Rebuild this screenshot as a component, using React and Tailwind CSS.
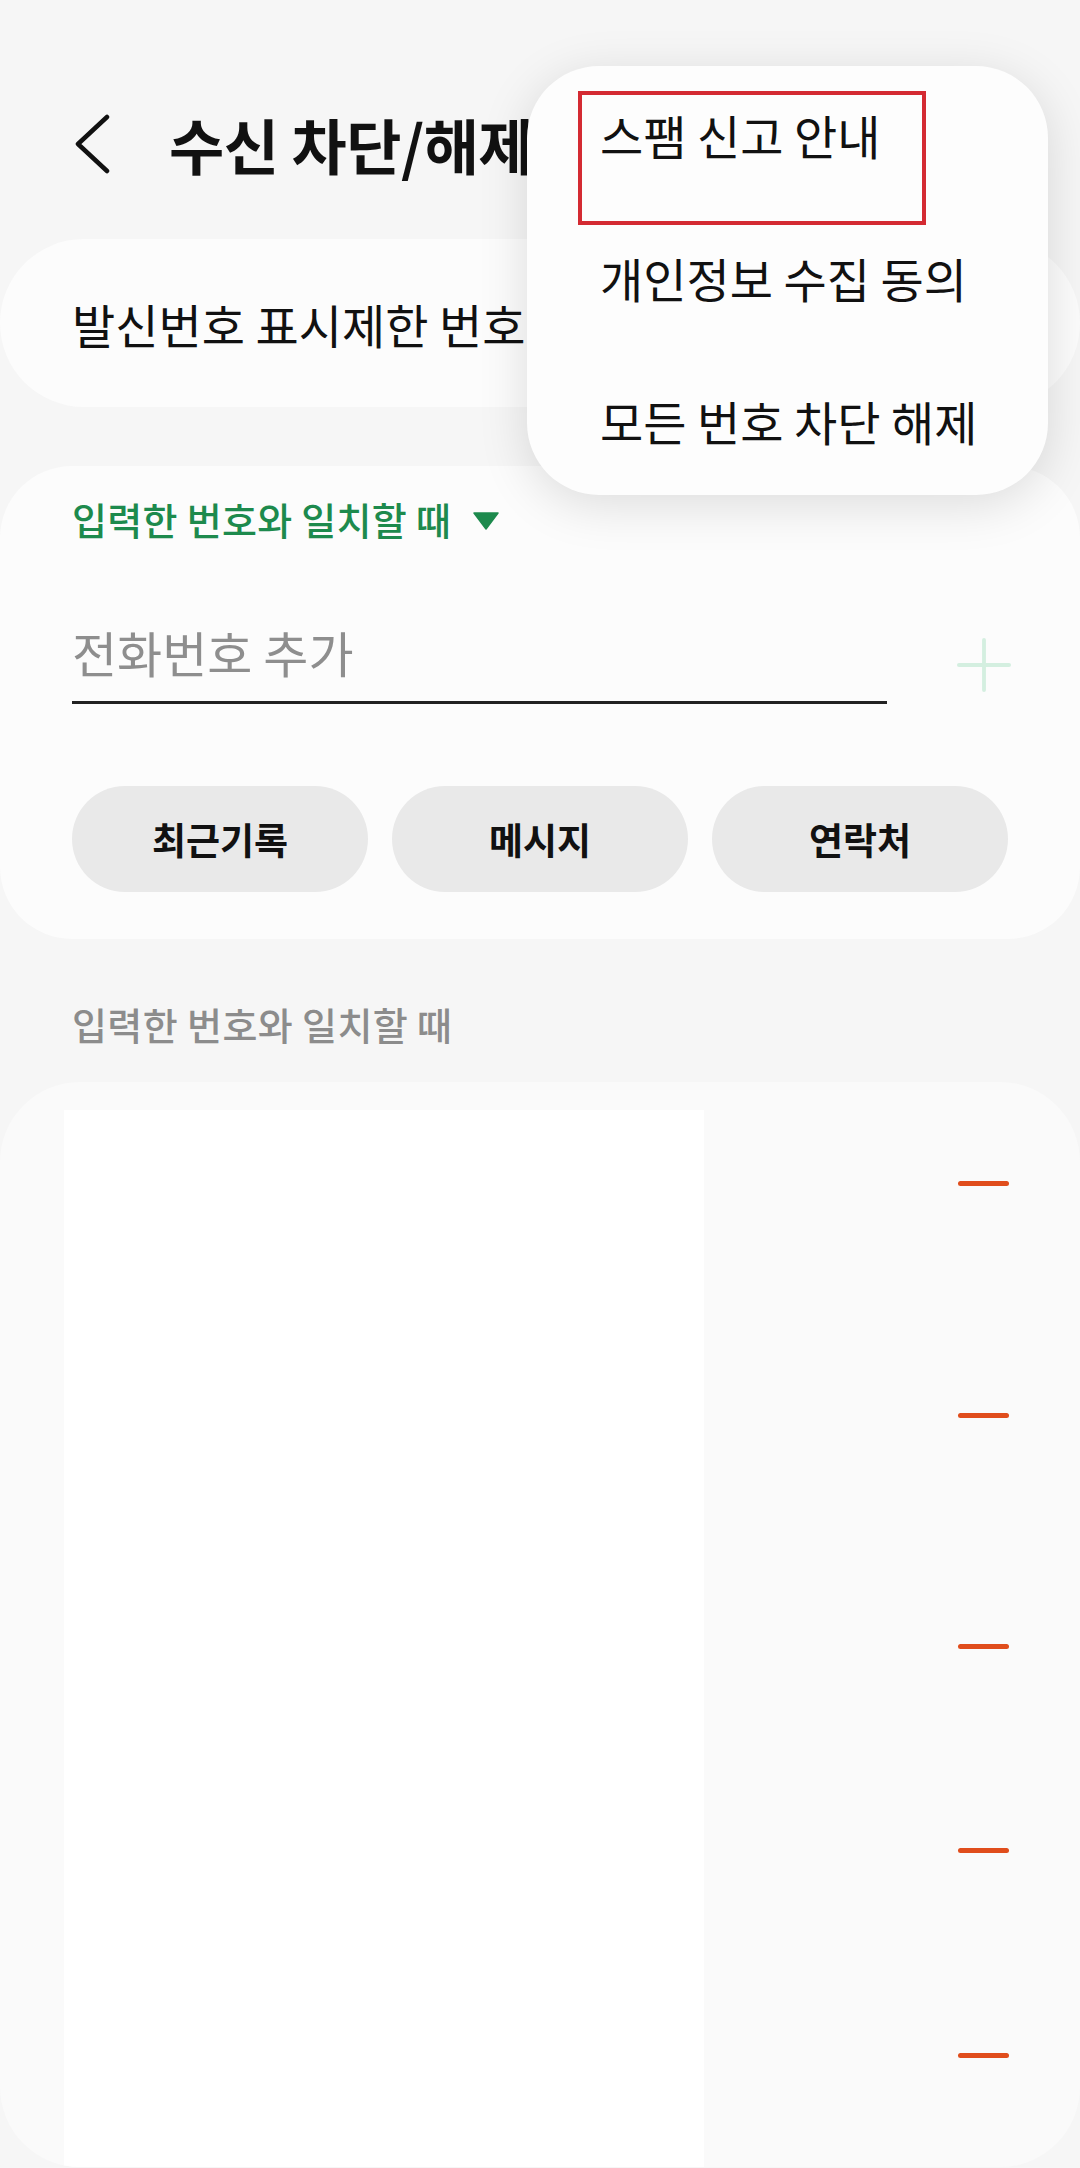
import React from "react";

const FONT = { fontFamily: '"Noto Sans CJK KR", "Noto Sans", sans-serif' };

function Minus() {
  return <div className="w-[51px] h-[5px] rounded-full bg-[#e04d1c]" />;
}

export default function App() {
  return (
    <div
      className="relative w-[1080px] h-[2168px] overflow-hidden bg-[#f6f6f6] text-[#111]"
      style={FONT}
    >
      {/* Header */}
      <div className="flex items-center h-[88px] mt-[100px] mb-[51px] pl-[74px]">
        <svg width="38" height="60" viewBox="0 0 38 60" className="shrink-0">
          <polyline
            points="33,3 4,30 33,57"
            fill="none"
            stroke="#111"
            strokeWidth="4.5"
            strokeLinecap="round"
            strokeLinejoin="round"
          />
        </svg>
        <h1 className="ml-[57px] text-[60px] font-bold leading-none tracking-[-0.5px] whitespace-nowrap">
          수신 차단/해제
        </h1>
      </div>

      {/* Card 1 */}
      <div className="h-[168px] rounded-[84px] bg-[#fcfcfc] flex items-center px-[72px] overflow-hidden">
        <span className="text-[47px] leading-none whitespace-nowrap">발신번호 표시제한 번호 차단</span>
      </div>

      {/* Card 2 */}
      <div className="mt-[59px] rounded-[72px] bg-[#fcfcfc] px-[72px] pt-[30px] pb-[47px]">
        <div className="flex items-center h-[46px] gap-[22px]">
          <span className="text-[38px] font-medium text-[#1d8a4d] leading-none whitespace-nowrap tracking-[0.3px]">
            입력한 번호와 일치할 때
          </span>
          <svg width="26" height="18" viewBox="0 0 26 18" className="mt-[4px]">
            <polygon points="1,1 25,1 13,17" fill="#1d8a4d" stroke="#1d8a4d" strokeWidth="1.5" strokeLinejoin="round" />
          </svg>
        </div>

        <div className="mt-[70px] flex items-start">
          <div className="w-[815px] h-[92px] border-b-[3px] border-[#222]">
            <span className="block text-[49px] leading-[80px] text-[#8e8e8e] whitespace-nowrap">
              전화번호 추가
            </span>
          </div>
          <div className="ml-auto mr-[-3px] mt-[26px] w-[54px] h-[54px] flex items-center justify-center">
            <svg width="56" height="56" viewBox="0 0 56 56">
              <line x1="28" y1="2" x2="28" y2="54" stroke="#d4efe0" strokeWidth="4" strokeLinecap="round" />
              <line x1="2" y1="28" x2="54" y2="28" stroke="#d4efe0" strokeWidth="4" strokeLinecap="round" />
            </svg>
          </div>
        </div>

        <div className="mt-[82px] grid grid-cols-3 gap-[24px]">
          {["최근기록", "메시지", "연락처"].map((t) => (
            <div
              key={t}
              className="h-[106px] rounded-full bg-[#e9e9e9] flex items-center justify-center text-[37px] font-bold leading-none"
            >
              {t}
            </div>
          ))}
        </div>
      </div>

      {/* Section label */}
      <div className="mt-[62px] h-[46px] flex items-center px-[72px]">
        <span className="text-[38px] font-medium text-[#8c8c8c] leading-none whitespace-nowrap tracking-[0.4px]">입력한 번호와 일치할 때</span>
      </div>

      {/* Card 3 */}
      <div className="mt-[35px] h-[1085px] rounded-[80px] bg-[#fafafa] pt-[28px] flex overflow-hidden">
        <div className="ml-[64px] w-[640px] self-stretch bg-white" />
        <div className="ml-auto mr-[71px] flex flex-col pt-[71px]">
          <Minus />
          <div className="mt-[227px]"><Minus /></div>
          <div className="mt-[226px]"><Minus /></div>
          <div className="mt-[199px]"><Minus /></div>
          <div className="mt-[200px]"><Minus /></div>
        </div>
      </div>

      {/* Overflow menu */}
      <div className="absolute left-[527px] top-[66px] w-[521px] h-[429px] rounded-[72px] bg-[#fdfdfd] shadow-[0_10px_50px_rgba(0,0,0,0.13)] pl-[73px]">
        {["스팸 신고 안내", "개인정보 수집 동의", "모든 번호 차단 해제"].map((t) => (
          <div key={t} className="h-[143px] flex items-center">
            <span className="text-[47px] leading-none whitespace-nowrap mb-[6px]">{t}</span>
          </div>
        ))}
      </div>

      {/* Red annotation box */}
      <div className="absolute left-[578px] top-[91px] w-[348px] h-[134px] border-[4px] border-[#d42a32]" />
    </div>
  );
}
